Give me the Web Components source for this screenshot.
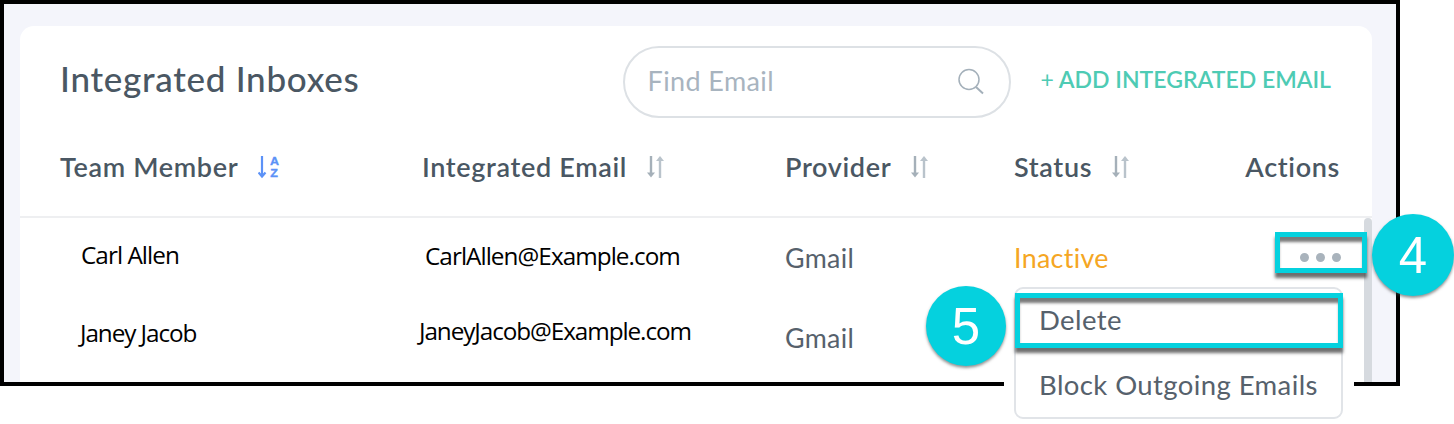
<!DOCTYPE html>
<html lang="en">
<head>
<meta charset="utf-8">
<title>Integrated Inboxes</title>
<style>
  html, body { margin: 0; padding: 0; background: #fff; }
  body { width: 1454px; height: 424px; overflow: hidden; font-family: Lato, "Open Sans", sans-serif; }
</style>
</head>
<body>
<inbox-screen></inbox-screen>
<script>
class SortIcon extends HTMLElement {
  constructor() {
    super();
    this.attachShadow({ mode: 'open' });
  }

  connectedCallback() {
    const az = this.hasAttribute('az');
    this.shadowRoot.innerHTML = `
      <style>
        :host { display: inline-flex; margin-left: var(--sort-gap, 20px); }
        svg { display: block; }
        text { font: 700 10.4px "Liberation Sans", sans-serif; fill: #5c92f7; stroke: #5c92f7; stroke-width: .3px; }
      </style>
      ${az ? `
      <svg width="24" height="26" viewBox="0 0 24 26">
        <path d="M4 2v20M.5 18.5 4 22.5l3.5-4" fill="none" stroke="#5c92f7" stroke-width="2.2"/>
        <text transform="translate(12 10.5) scale(1.2 1)">A</text>
        <text transform="translate(12.3 22.5) scale(1.2 1)">Z</text>
      </svg>` : `
      <svg width="22" height="24" viewBox="0 0 22 24">
        <path d="M4 1v19" stroke="#a5b0b9" stroke-width="2.4" fill="none"/>
        <path d="M0 17.5h8L4 22.5z" fill="#a5b0b9"/>
        <path d="M13 4v19" stroke="#b9c3cb" stroke-width="2.4" fill="none"/>
        <path d="M9 6h8L13 1z" fill="#b9c3cb"/>
      </svg>`}`;
  }
}

class SearchBox extends HTMLElement {
  constructor() {
    super();
    this.attachShadow({ mode: 'open' });
  }

  connectedCallback() {
    this.shadowRoot.innerHTML = `
      <style>
        :host {
          display: flex;
          align-items: center;
          box-sizing: border-box;
          width: 388px;
          height: 72px;
          padding: 0 24px 0 23px;
          border: 2px solid #dde1e5;
          border-radius: 36px;
          background: #fff;
        }
        span {
          flex: 1;
          color: #a8b4bf;
          font-size: 27px;
          letter-spacing: .4px;
          margin-top: -3px;
        }
        svg { display: block; }
      </style>
      <span>${this.getAttribute('placeholder')}</span>
      <svg width="28" height="28" viewBox="0 0 28 28">
        <circle cx="12" cy="11.5" r="10" fill="none" stroke="#a4b0ba" stroke-width="1.5"/>
        <path d="M19 19l7 6.5" fill="none" stroke="#a4b0ba" stroke-width="2"/>
      </svg>`;
  }
}

class HighlightBox extends HTMLElement {
  constructor() {
    super();
    this.attachShadow({ mode: 'open' });
  }

  connectedCallback() {
    this.shadowRoot.innerHTML = `
      <style>
        :host {
          display: block;
          box-sizing: border-box;
          border: 5px solid #05d1de;
          box-shadow: 0 5px 3px rgba(50, 50, 50, .7), inset 0 6px 3px -1px rgba(50, 50, 50, .65);
        }
      </style>
      <slot></slot>`;
  }
}

class CalloutBadge extends HTMLElement {
  constructor() {
    super();
    this.attachShadow({ mode: 'open' });
  }

  connectedCallback() {
    this.shadowRoot.innerHTML = `
      <style>
        :host {
          position: absolute;
          display: flex;
          align-items: center;
          justify-content: center;
          border-radius: 50%;
          background: #05d1de;
          color: #fff;
          font: 400 51px "Liberation Sans", sans-serif;
          box-shadow: 0 2px 3px rgba(60, 60, 60, .55);
        }
      </style>
      <slot></slot>`;
  }
}

class MoreButton extends HTMLElement {
  constructor() {
    super();
    this.attachShadow({ mode: 'open' });
  }

  connectedCallback() {
    this.shadowRoot.innerHTML = `
      <style>
        :host { display: block; position: relative; z-index: 1; margin: 0 5px 12px 0; }
        highlight-box { width: 92px; height: 41px; }
        .dots {
          display: flex;
          justify-content: center;
          align-items: center;
          gap: 7px;
          height: 20px;
          padding: 11px 2px 0 0;
        }
        i { width: 9px; height: 9px; border-radius: 50%; background: #a9b3bc; }
      </style>
      <highlight-box><div class="dots"><i></i><i></i><i></i></div></highlight-box>`;
  }
}

class ActionMenu extends HTMLElement {
  constructor() {
    super();
    this.attachShadow({ mode: 'open' });
  }

  connectedCallback() {
    this.shadowRoot.innerHTML = `
      <style>
        :host {
          position: absolute;
          left: 1004px;
          top: 282px;
          width: 350px;
          height: 142px;
          box-sizing: border-box;
          padding: 5px 11px 0 10px;
          background: #fff;
          color: #56616c;
          font-size: 27.5px;
        }
        .menu {
          box-sizing: border-box;
          height: 132px;
          padding-top: 4px;
          border: 2px solid #e1e4e8;
          border-radius: 9px;
        }
        highlight-box {
          margin: 0 -2px 0 -1px;
          height: 55px;
          display: flex;
          align-items: center;
        }
        .item { padding-left: 19px; letter-spacing: .4px; }
        .hit { margin-top: -3px; }
        .second { padding: 20px 0 0 23px; }
      </style>
      <div class="menu">
        <highlight-box><div class="item hit">Delete</div></highlight-box>
        <div class="item second">Block Outgoing Emails</div>
      </div>`;
  }
}

class InboxRow extends HTMLElement {
  constructor() {
    super();
    this.attachShadow({ mode: 'open' });
  }

  connectedCallback() {
    const a = n => this.getAttribute(n) || '';
    this.shadowRoot.innerHTML = `
      <style>
        :host {
          display: grid;
          grid-template-columns: 362px 363px 229px 1fr;
          align-items: center;
          height: 80px;
          padding-left: 40px;
        }
        .pasted {
          color: #000;
          font-size: 24.3px;
          font-family: "Open Sans", sans-serif;
          letter-spacing: ${a('spacing') || '-.95'}px;
        }
        .name { margin-left: ${a('name-x')}px; transform: translateY(${a('name-y')}px); }
        .mail { margin-left: ${a('mail-x')}px; transform: translateY(${a('mail-y')}px); }
        .cell { font-size: 26.8px; color: #56616c; letter-spacing: .35px; }
        .status { display: flex; justify-content: space-between; align-items: center; }
        .inactive { color: #f5a623; }
      </style>
      <span class="pasted name">${a('name')}</span>
      <span class="pasted mail">${a('email')}</span>
      <span class="cell">${a('provider')}</span>
      <div class="cell status">
        <span class="inactive">${a('status')}</span>
        <slot></slot>
      </div>`;
  }
}

class InboxCard extends HTMLElement {
  constructor() {
    super();
    this.attachShadow({ mode: 'open' });
  }

  connectedCallback() {
    this.shadowRoot.innerHTML = `
      <style>
        :host {
          display: block;
          position: relative;
          height: 100%;
          background: #fff;
          border-radius: 14px 14px 0 0;
          color: #4a5763;
        }
        .top {
          display: flex;
          align-items: center;
          padding: 20px 41px 0 40px;
        }
        h1 {
          flex: 1;
          margin: -8px 0 0;
          font-size: 35px;
          font-weight: 500;
          letter-spacing: .72px;
        }
        .add {
          margin: -6px 0 0 30px;
          color: #4ecbb4;
          font-size: 23px;
          font-weight: 600;
          letter-spacing: 0;
        }
        .add b { font-weight: 400; }
        .heads {
          display: grid;
          grid-template-columns: 362px 363px 229px 1fr;
          align-items: center;
          box-sizing: border-box;
          height: 100px;
          padding: 0 32px 1px 40px;
          border-bottom: 2px solid #eeeff1;
          font-size: 27px;
          font-weight: 600;
          letter-spacing: .66px;
        }
        .heads div, .heads span { display: flex; align-items: center; }
        .heads .last { justify-content: space-between; }
        .scroll {
          position: absolute;
          right: 0;
          top: 192px;
          bottom: 0;
          width: 8px;
          background: #d6dadf;
          border-radius: 4px 4px 0 0;
        }
      </style>
      <div class="top">
        <h1>Integrated Inboxes</h1>
        <search-box placeholder="Find Email"></search-box>
        <span class="add"><b>+</b> ADD INTEGRATED EMAIL</span>
      </div>
      <div class="heads">
        <div>Team Member<sort-icon az></sort-icon></div>
        <div>Integrated Email<sort-icon></sort-icon></div>
        <div>Provider<sort-icon></sort-icon></div>
        <div class="last"><span>Status<sort-icon></sort-icon></span><span>Actions</span></div>
      </div>
      <div class="scroll"></div>
      <slot></slot>`;
  }
}

class InboxScreen extends HTMLElement {
  constructor() {
    super();
    this.attachShadow({ mode: 'open' });
  }

  connectedCallback() {
    this.shadowRoot.innerHTML = `
      <style>
        :host { display: block; position: relative; width: 1454px; height: 424px; }
        .frame {
          box-sizing: border-box;
          width: 1400px;
          height: 386px;
          padding: 22px 24px 0 16px;
          border: 4px solid #000;
          background: #f4f5fb;
          overflow: hidden;
        }
        callout-badge.four { left: 1372px; top: 214px; width: 82px; height: 82px; }
        callout-badge.five { left: 926px; top: 286px; width: 80px; height: 80px; }
      </style>
      <div class="frame">
        <inbox-card>
          <inbox-row name="Carl Allen" name-x="21" name-y="-4" email="CarlAllen@Example.com" mail-x="3" mail-y="-3"
            provider="Gmail" status="Inactive"><more-button></more-button></inbox-row>
          <inbox-row name="Janey Jacob" name-x="20" name-y="-6" email="JaneyJacob@Example.com" mail-x="-3" mail-y="-8"
            spacing="-1.08" provider="Gmail"></inbox-row>
        </inbox-card>
      </div>
      <action-menu></action-menu>
      <callout-badge class="four">4</callout-badge>
      <callout-badge class="five">5</callout-badge>`;
  }
}

customElements.define('sort-icon', SortIcon);
customElements.define('search-box', SearchBox);
customElements.define('highlight-box', HighlightBox);
customElements.define('callout-badge', CalloutBadge);
customElements.define('more-button', MoreButton);
customElements.define('action-menu', ActionMenu);
customElements.define('inbox-row', InboxRow);
customElements.define('inbox-card', InboxCard);
customElements.define('inbox-screen', InboxScreen);
</script>
</body>
</html>
